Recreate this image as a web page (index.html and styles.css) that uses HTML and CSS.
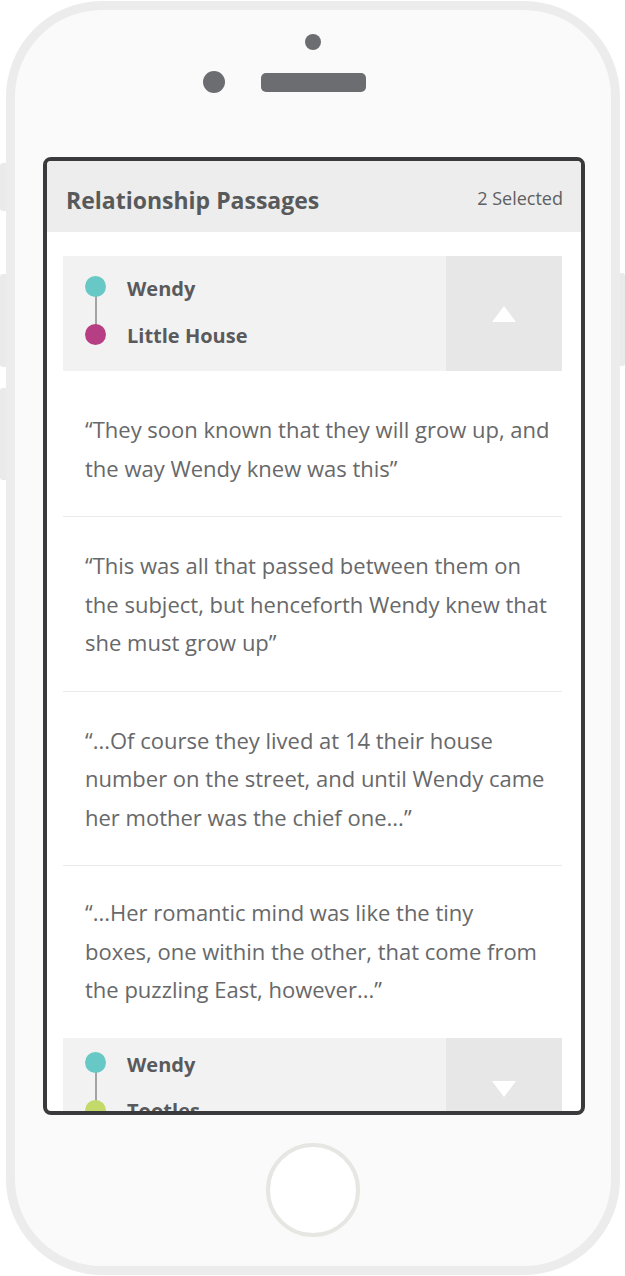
FILE: index.html
```html
<!DOCTYPE html>
<html lang="en">
<head>
<meta charset="utf-8">
<title>Relationship Passages</title>
<link rel="stylesheet" href="styles.css">
</head>
<body>
<div class="device">
  <span class="side-btn side-l1"></span>
  <span class="side-btn side-l2"></span>
  <span class="side-btn side-l3"></span>
  <span class="side-btn side-r1"></span>
  <div class="phone">
    <div class="camera"></div>
    <div class="earpiece">
      <span class="sensor"></span>
      <span class="speaker"></span>
      <span class="spacer"></span>
    </div>
    <div class="screen">
      <header class="app-header">
        <h1 class="app-title">Relationship Passages</h1>
        <span class="app-count">2 Selected</span>
      </header>
      <div class="app-body">
        <section class="rel-card">
          <div class="rel-head">
            <div class="rel-pair">
              <div class="rel-line"></div>
              <div class="rel-row"><span class="dot dot-teal"></span><span class="rel-name">Wendy</span></div>
              <div class="rel-row"><span class="dot dot-magenta"></span><span class="rel-name">Little House</span></div>
            </div>
            <div class="rel-toggle">
              <svg width="24" height="16" viewBox="0 0 24 16"><polygon points="12,0 24,16 0,16" fill="#ffffff"/></svg>
            </div>
          </div>
          <ul class="passages">
            <li class="passage">“They soon known that they will grow up, and<br>the way Wendy knew was this”</li>
            <li class="passage">“This was all that passed between them on<br>the subject, but henceforth Wendy knew that<br>she must grow up”</li>
            <li class="passage">“...Of course they lived at 14 their house<br>number on the street, and until Wendy came<br>her mother was the chief one...”</li>
            <li class="passage">“...Her romantic mind was like the tiny<br>boxes, one within the other, that come from<br>the puzzling East, however...”</li>
          </ul>
        </section>
        <section class="rel-card rel-card-collapsed">
          <div class="rel-head">
            <div class="rel-pair">
              <div class="rel-line"></div>
              <div class="rel-row"><span class="dot dot-teal"></span><span class="rel-name">Wendy</span></div>
              <div class="rel-row"><span class="dot dot-lime"></span><span class="rel-name">Tootles</span></div>
            </div>
            <div class="rel-toggle">
              <svg width="24" height="16" viewBox="0 0 24 16"><polygon points="0,0 24,0 12,16" fill="#ffffff"/></svg>
            </div>
          </div>
        </section>
      </div>
    </div>
    <div class="home-btn"></div>
  </div>
</div>
</body>
</html>
```
FILE: styles.css
```css
* { box-sizing: border-box; }
html, body { margin: 0; padding: 0; background: #ffffff; }
body {
  font-family: "Open Sans", "Noto Sans", sans-serif;
  width: 625px;
  height: 1276px;
  overflow: hidden;
}
.device {
  position: relative;
  padding: 1px 5px 0 6px;
}
.side-btn {
  position: absolute;
  width: 6px;
  background: #e9eae9;
}
.side-l1 { left: 0; top: 163px; height: 48px; border-radius: 3px 0 0 3px; }
.side-l2 { left: 0; top: 274px; height: 93px; border-radius: 3px 0 0 3px; }
.side-l3 { left: 0; top: 388px; height: 92px; border-radius: 3px 0 0 3px; }
.side-r1 { right: 0; top: 273px; height: 93px; width: 5px; border-radius: 0 3px 3px 0; }
.phone {
  width: 614px;
  height: 1274px;
  border: 9px solid #ebeceb;
  border-radius: 96px;
  background: #fafafa;
  display: flex;
  flex-direction: column;
  align-items: center;
}
.camera {
  margin-top: 24px;
  width: 16px;
  height: 16px;
  border-radius: 50%;
  background: #6c6d71;
}
.earpiece {
  margin-top: 21px;
  display: flex;
  align-items: center;
  gap: 36px;
}
.sensor {
  width: 22px;
  height: 22px;
  border-radius: 50%;
  background: #6c6d71;
}
.speaker {
  width: 105px;
  height: 19px;
  border-radius: 5px;
  background: #6c6d71;
}
.spacer { width: 22px; height: 22px; }
.screen {
  margin-top: 64px;
  margin-left: 2px;
  width: 542px;
  height: 958px;
  border: 4px solid #3a3a3c;
  border-radius: 8px;
  background: #ffffff;
  overflow: hidden;
}
.app-header {
  height: 71px;
  background: #ecedec;
  display: flex;
  align-items: center;
  justify-content: space-between;
  padding: 7px 18px 0 19px;
}
.app-title {
  margin: 0;
  font-size: 23px;
  font-weight: 700;
  color: #58595b;
}
.app-count {
  font-size: 18px;
  color: #5f6062;
  margin-top: -5px;
}
.app-body {
  padding: 24px 19px 0 16px;
}
.rel-head {
  display: flex;
  height: 115px;
  background: #f2f2f2;
}
.rel-pair {
  position: relative;
  flex: 1;
  padding: 20px 0 0 22px;
  display: flex;
  flex-direction: column;
  gap: 27px;
}
.rel-line {
  position: absolute;
  left: 32px;
  top: 30px;
  width: 2px;
  height: 49px;
  background: #a3a3a3;
}
.rel-row {
  position: relative;
  display: flex;
  align-items: center;
  gap: 21px;
  height: 21px;
}
.dot {
  width: 21px;
  height: 21px;
  border-radius: 50%;
  flex: none;
}
.dot-teal { background: #67c8c5; }
.dot-magenta { background: #b83e83; }
.dot-lime { background: #c3da6a; }
.rel-name {
  font-size: 20px;
  font-weight: 700;
  color: #5a5a5c;
  margin-top: 4px;
}
.rel-row + .rel-row .rel-name { margin-top: 1px; }
.rel-toggle {
  width: 116px;
  background: #e6e7e6;
  display: flex;
  align-items: center;
  justify-content: center;
}
.passages {
  list-style: none;
  margin: 10px 0 0;
  padding: 0;
}
.passage {
  padding: 29px 0 29px 22px;
  font-size: 22px;
  line-height: 38.5px;
  color: #67686a;
  border-bottom: 1px solid #e9e9e9;
  white-space: nowrap;
}
.passage:last-child { border-bottom: none; padding-top: 27px; padding-bottom: 29px; }
.rel-card-collapsed .rel-head { height: 102px; }
.rel-card-collapsed .rel-pair { padding-top: 14px; }
.rel-card-collapsed .rel-line { top: 24px; }
.home-btn {
  margin-top: 28px;
  width: 94px;
  height: 94px;
  border-radius: 50%;
  border: 4px solid #e6e6e2;
  background: #ffffff;
}
```
